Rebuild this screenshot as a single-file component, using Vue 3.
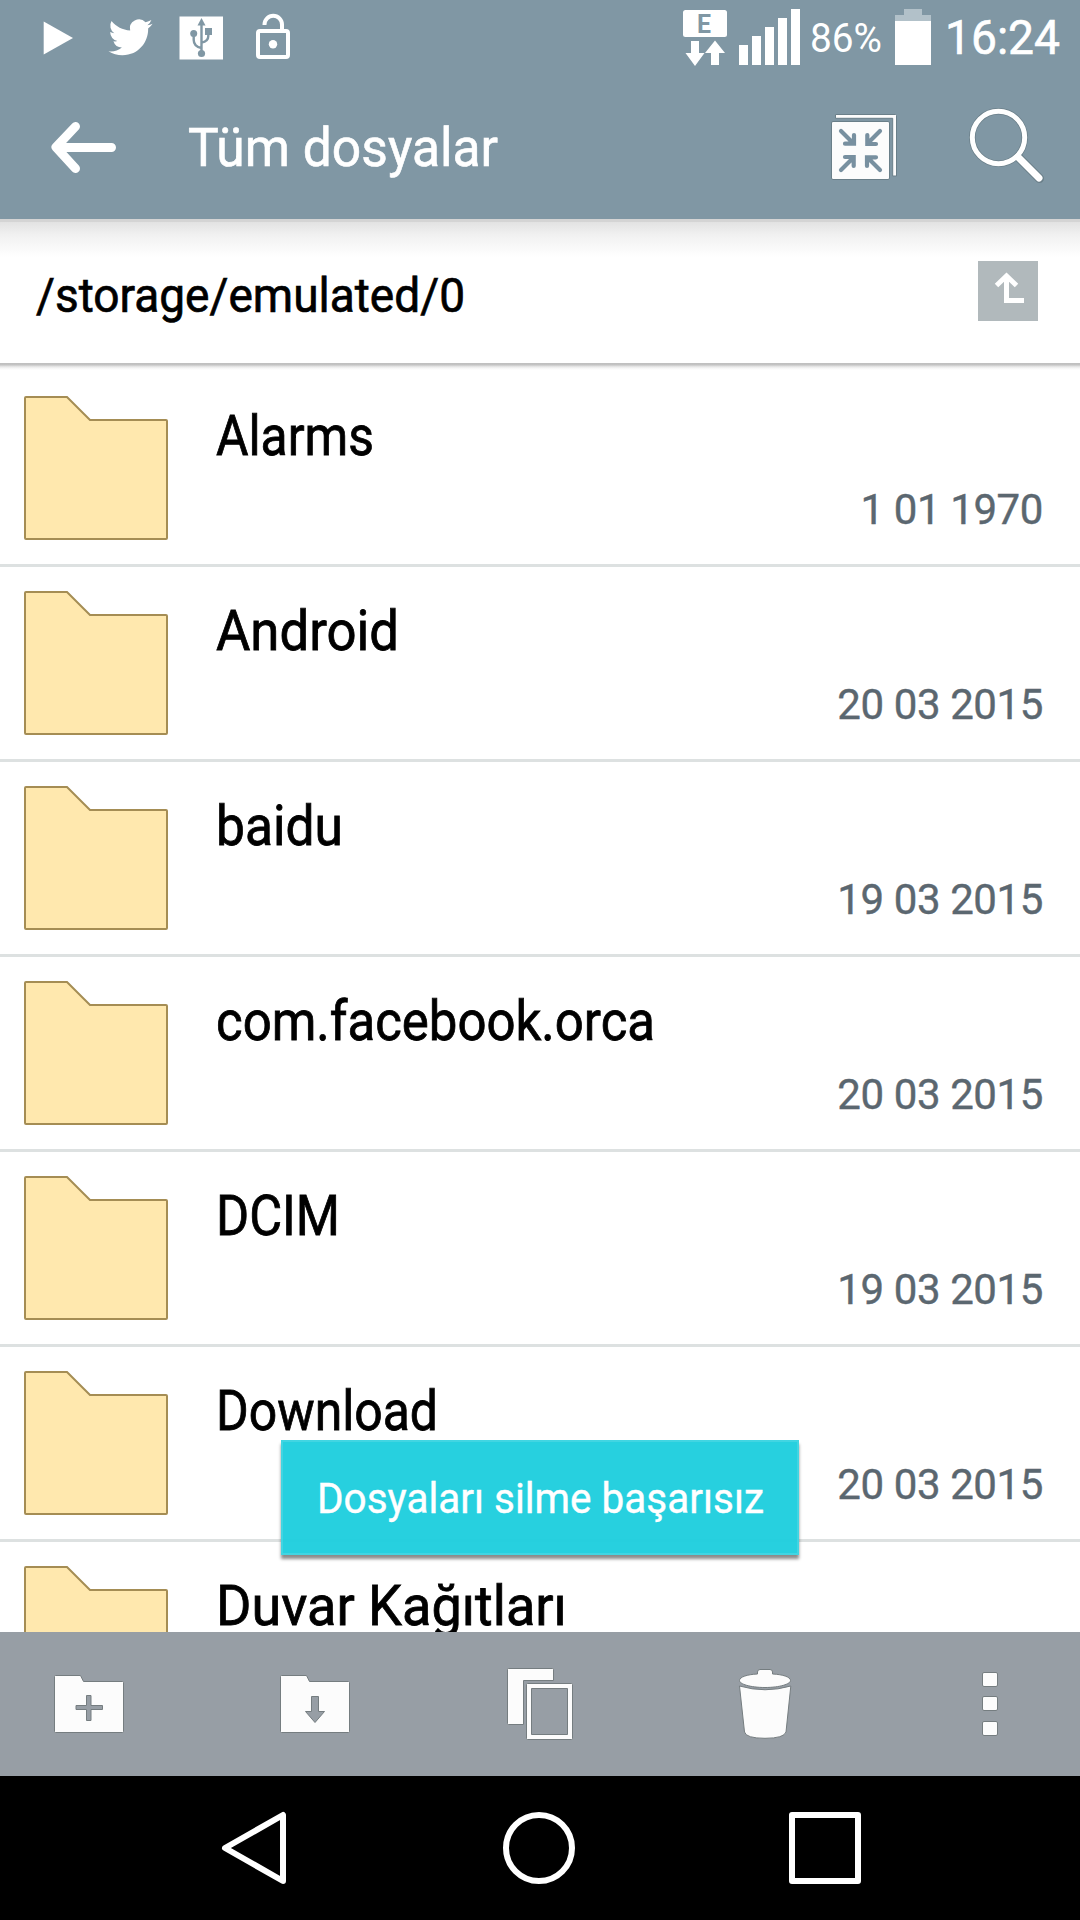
<template>
  <div class="screen">
    <header class="top">
      <div class="status">
        <div class="notices">
          <svg viewBox="36 0 48 72" width="48" height="72"><path d="M43.7 21.5L73 38L43.7 54.5z" fill="#fff"/></svg>
          <svg viewBox="108 0 48 72" width="48" height="72"><path transform="translate(108.5 15.3) scale(1.84)" fill="#fff" d="M23.95 4.57a10 10 0 0 1-2.82.77 4.96 4.96 0 0 0 2.16-2.72c-.95.55-2 .95-3.13 1.18a4.92 4.92 0 0 0-8.38 4.48C7.69 8.1 4.07 6.13 1.64 3.16a4.92 4.92 0 0 0 1.52 6.57 4.9 4.9 0 0 1-2.23-.61v.06a4.92 4.92 0 0 0 3.95 4.83 5 5 0 0 1-2.21.08 4.94 4.94 0 0 0 4.6 3.42A9.87 9.87 0 0 1 0 19.54a14 14 0 0 0 7.55 2.21c9.05 0 14-7.5 14-13.98 0-.21 0-.42-.02-.63a9.94 9.94 0 0 0 2.42-2.57z"/></svg>
          <svg viewBox="180 0 48 72" width="48" height="72">
            <path d="M179.5 16.5h43.5v43h-43.5z" fill="#fff"/>
            <g fill="none" stroke="#8097a4" stroke-width="2.4"><path d="M201.5 22v32M193.7 33v7q0 6.5 7.8 8M208.3 33v3q0 5.5-6.8 6.5"/></g>
            <g fill="#8097a4"><path d="M201.5 18l4 7.5h-8z"/><circle cx="193.7" cy="33.5" r="3.5"/><path d="M205 28h7v7h-7z"/><circle cx="201.5" cy="53.5" r="3.6"/></g>
          </svg>
          <svg viewBox="252 0 48 72" width="48" height="72">
            <rect x="258" y="31" width="30" height="26" rx="2" fill="none" stroke="#fff" stroke-width="4"/>
            <path d="M264.5 25v-.5a8.5 8.5 0 0 1 17.5 0V30" fill="none" stroke="#fff" stroke-width="4"/>
            <circle cx="273" cy="44.3" r="4.2" fill="#fff"/>
          </svg>
        </div>
        <div class="system">
          <svg viewBox="682 0 46 72" width="46" height="72">
            <rect x="683" y="10" width="44" height="27" rx="2.5" fill="#fff"/>
            <text x="697" y="33" class="net" textLength="14" lengthAdjust="spacingAndGlyphs">E</text>
            <path d="M691 41h8v12h5.5L695 66l-9.5-13H691zM711 65h8V53h6L715 40.5 705 53h6z" fill="#fff"/>
          </svg>
          <svg viewBox="739 0 61 72" width="61" height="72"><path d="M739 45h9v20h-9zM752 36h9v29h-9zM765 27h9v38h-9zM778 18h9v47h-9zM791 9h9v56h-9z" fill="#fff"/></svg>
          <svg viewBox="811 0 70 72" width="70" height="72"><text x="810" y="52" class="percent" textLength="72" lengthAdjust="spacingAndGlyphs">86%</text></svg>
          <svg viewBox="895 0 36 72" width="36" height="72"><path d="M904 9h18v6h9v6h-36v-6h9z" fill="#b2c1c9"/><path d="M895 21h36v44h-36z" fill="#fff"/></svg>
          <svg viewBox="948 0 112 72" width="112" height="72"><text x="945" y="54" class="clock" textLength="115" lengthAdjust="spacingAndGlyphs">16:24</text></svg>
        </div>
      </div>
      <div class="appbar">
        <svg viewBox="48 72 72 147" width="72" height="147"><path d="M75.5 126.5L56 147.2 75.5 168.500M57 147.500h54.500" fill="none" stroke="#fff" stroke-width="9" stroke-linecap="round" stroke-linejoin="round"/></svg>
        <svg class="title-box" viewBox="188 72 310 147" width="310" height="147"><text x="188" y="166" class="title" textLength="310" lengthAdjust="spacingAndGlyphs">Tüm dosyalar</text></svg>
        <svg class="collapse" viewBox="824 72 80 147" width="80" height="147">
          <g fill="#fcfcfc" stroke="#6a7f89" stroke-width="1"><path d="M835.5 114.5h60a1 1 0 0 1 1 1v60.500h-3.800v-57.700h-57.200z"/><rect x="831.5" y="121.5" width="58" height="58" rx="1.5"/></g>
          <g fill="none" stroke="#7890a0" stroke-width="4.2" stroke-linecap="round">
            <path v-for="angle in [0, 90, 180, 270]" :key="angle" :transform="`rotate(${angle} 860.5 150.5)`" d="M841 131l12 12M854 135v8.7h-9"/>
          </g>
        </svg>
        <svg viewBox="964 72 84 147" width="84" height="147" fill="none">
          <path d="M1018 157l21.500 21.500" stroke="#6a7f89" stroke-width="9" stroke-linecap="round"/>
          <circle cx="998.5" cy="137.5" r="26.2" stroke="#6a7f89" stroke-width="6.5"/>
          <path d="M1018 157l21 21" stroke="#fff" stroke-width="7" stroke-linecap="round"/>
          <circle cx="998.5" cy="137.5" r="26.2" stroke="#fff" stroke-width="5"/>
        </svg>
      </div>
    </header>

    <div class="path">
      <svg viewBox="36 219 428 144" width="428" height="144"><text x="36" y="312" class="path-text" textLength="429" lengthAdjust="spacingAndGlyphs">/storage/emulated/0</text></svg>
      <button type="button" class="up" aria-label="Yukarı">
        <svg viewBox="0 0 60 60" width="60" height="60"><path d="M18.5 24.500L28.500 15l10 9.500M28.500 16v23.500H46" fill="none" stroke="#fff" stroke-width="5"/></svg>
      </button>
    </div>

    <main class="list">
      <div v-for="item in files" :key="item.name" class="row">
        <svg class="folder" viewBox="0 0 144 144" width="144" height="144"><path d="M2 1h41l23 23h76a1 1 0 0 1 1 1v117a1 1 0 0 1-1 1H2a1 1 0 0 1-1-1V2a1 1 0 0 1 1-1z" fill="#ffe8ae" stroke="#a58d54" stroke-width="2"/></svg>
        <svg class="name-box" :width="item.width" height="192"><text x="-1" y="82.5" class="name" :textLength="item.width" lengthAdjust="spacingAndGlyphs">{{ item.name }}</text></svg>
        <span class="date">{{ item.date }}</span>
      </div>
      <div class="toast">
        <svg viewBox="281 1440 518 115" width="518" height="115"><text x="317" y="1512.5" class="toast-text" textLength="447" lengthAdjust="spacingAndGlyphs">Dosyaları silme başarısız</text></svg>
      </div>
    </main>

    <footer class="toolbar">
      <svg viewBox="0 0 96 144" width="96" height="144">
        <path d="M14.5 43.5h25l3 6h39a1 1 0 0 1 1 1v49a1 1 0 0 1-1 1h-67a1 1 0 0 1-1-1v-55a1 1 0 0 1 1-1z" class="glyph"/>
        <path d="M45.5 63.5h4.5v10h11.500v4H50v11h-4.500v-11H35v-4h10.500z" class="hole"/>
      </svg>
      <svg viewBox="0 0 96 144" width="96" height="144">
        <path d="M15.5 43.5h25l3 6h39a1 1 0 0 1 1 1v49a1 1 0 0 1-1 1h-67a1 1 0 0 1-1-1v-55a1 1 0 0 1 1-1z" class="glyph"/>
        <path d="M45.5 64.5h7v15h6L49 90.500l-9.500-11h6z" class="hole"/>
      </svg>
      <svg viewBox="0 0 96 144" width="96" height="144">
        <path d="M17.5 36.5h44a1 1 0 0 1 1 1v11h-30v44h-15a1 1 0 0 1-1-1v-54a1 1 0 0 1 1-1z" class="glyph"/>
        <path fill-rule="evenodd" d="M36.5 51.5h44a1 1 0 0 1 1 1v54a1 1 0 0 1-1 1h-44a1 1 0 0 1-1-1v-54a1 1 0 0 1 1-1zM40.500 56.500v46h36v-46z" class="glyph"/>
      </svg>
      <svg viewBox="0 0 96 144" width="96" height="144">
        <path d="M23.5 54Q49 61.500 74.800 54L70 100Q68 106.300 49 106.300T28.500 100z" class="glyph"/>
        <path d="M41.5 42V40q0-2.500 2.500-2.500h10q2.500 0 2.500 2.500v2C67 42.500 74.500 45 74.500 48.500S64 55.500 49 55.500s-25.500-3.500-25.500-7S31 42.500 41.500 42z" class="glyph"/>
      </svg>
      <svg viewBox="0 0 96 144" width="96" height="144">
        <rect v-for="y in [40.5, 64.5, 89.5]" :key="y" x="41.5" :y="y" width="15" height="14" rx="1.5" class="glyph"/>
      </svg>
    </footer>

    <nav class="nav">
      <svg viewBox="0 0 72 72" width="72" height="72"><path d="M8 36L66 3v66z"/></svg>
      <svg viewBox="0 0 72 72" width="72" height="72"><circle cx="36" cy="36" r="33"/></svg>
      <svg viewBox="0 0 72 72" width="72" height="72"><path d="M3 3h66v66H3z"/></svg>
    </nav>
  </div>
</template>

<script setup>
// width: drawn length of the name in px
const files = [
  { name: 'Alarms', date: '1 01 1970', width: 158 },
  { name: 'Android', date: '20 03 2015', width: 183 },
  { name: 'baidu', date: '19 03 2015', width: 127 },
  { name: 'com.facebook.orca', date: '20 03 2015', width: 439 },
  { name: 'DCIM', date: '19 03 2015', width: 124 },
  { name: 'Download', date: '20 03 2015', width: 222 },
  { name: 'Duvar Kağıtları', date: '', width: 351 },
]
</script>

<style>
body { margin: 0; background: #000; }
</style>

<style scoped>
.screen { width: 1080px; height: 1920px; display: flex; flex-direction: column; overflow: hidden; background: #fff; font-family: Roboto, "Noto Sans", sans-serif; }
svg { display: block; flex: none; overflow: visible; }
.top { flex: none; height: 219px; background: #8097a4; }
.status { display: flex; justify-content: space-between; height: 72px; padding: 0 20px 0 36px; }
.notices { display: flex; gap: 24px; }
.system { display: flex; }
.system svg:nth-child(2), .system svg:nth-child(3) { margin-left: 11px; }
.system svg:nth-child(4) { margin-left: 14px; }
.system svg:nth-child(5) { margin-left: 17px; }
.net { font-size: 26px; font-weight: 700; fill: #8097a4; }
.percent { font-size: 40px; fill: #fff; }
.clock { font-size: 48px; fill: #fff; stroke: #fff; stroke-width: 0.6; }
.appbar { display: flex; height: 147px; padding: 0 32px 0 48px; }
.title-box { margin-left: 68px; }
.title { font-size: 54px; fill: #fff; stroke: #fff; stroke-width: 0.6; }
.collapse { margin-left: auto; margin-right: 60px; }
.path { flex: none; display: flex; align-items: flex-start; justify-content: space-between; box-sizing: border-box; height: 153px; padding: 0 42px 0 36px; background: linear-gradient(#d4d4d4 3px, #e2e2e2 3px, #f1f1f1 16px, #fff 38px, #fff 144px, #bfbfbf 144px, #c4c4c4 146px, #dedede 147px, #f5f5f5 149px, #fff 151px); }
.path-text { font-size: 48px; fill: #000; stroke: #000; stroke-width: 0.7; }
.up { margin-top: 42px; padding: 0; border: none; background: #b1b9bc; }
.list { position: relative; flex: none; height: 1260px; overflow: hidden; }
.row { display: flex; height: 192px; padding: 0 37px 0 24px; border-bottom: 3px solid #dde1e1; }
.folder { margin-top: 24px; }
.name-box { margin-left: 49px; }
.name { font-size: 56px; fill: #000; stroke: #000; stroke-width: 0.8; }
.date { margin-left: auto; margin-top: 113px; font-size: 42px; line-height: 50px; letter-spacing: -0.4px; color: #5b6770; -webkit-text-stroke: 0.4px #5b6770; white-space: pre; }
.toast { position: absolute; left: 281px; top: 1068px; width: 518px; height: 115px; background: rgba(32, 206, 222, 0.97); box-shadow: inset 0 0 0 2px rgba(255, 255, 255, 0.12), 0 4px 3px rgba(0, 0, 0, 0.45); }
.toast-text { font-size: 42px; fill: #fff; stroke: #fff; stroke-width: 0.4; }
.toolbar { position: relative; flex: none; display: flex; gap: 129px; height: 144px; padding-left: 41px; background: #979ea5; }
.glyph { fill: #fcfcfc; stroke: #757d80; stroke-width: 1; }
.hole { fill: #979ea5; stroke: #757d80; stroke-width: 1; stroke-linejoin: round; }
.nav { flex: none; display: flex; align-items: center; gap: 214px; height: 144px; padding-left: 217px; background: #000; }
.nav svg { fill: none; stroke: #fff; stroke-width: 6; stroke-linejoin: round; }
</style>
